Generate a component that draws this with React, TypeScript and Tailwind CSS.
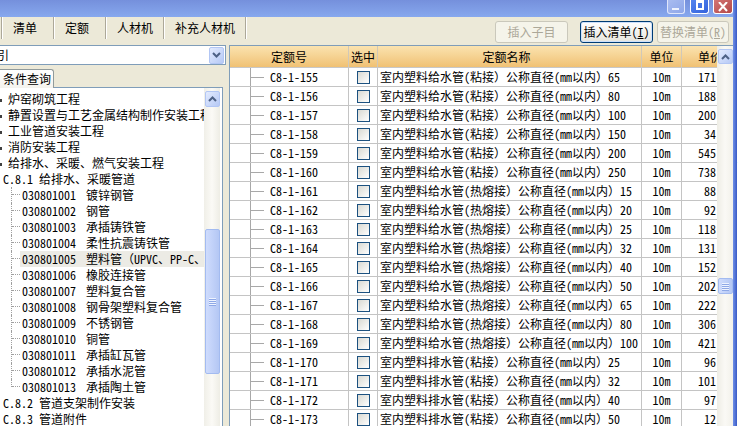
import React from "react";

const F = "font-['Noto_Sans_Mono_CJK_SC','Noto_Sans_CJK_SC',sans-serif]";

function Chevron({ up }: { up: boolean }) {
  return (
    <svg width="9" height="6" viewBox="0 0 9 6">
      <path
        d={up ? "M1 5L4.5 1.5L8 5" : "M1 1L4.5 4.5L8 1"}
        fill="none"
        stroke="#4d6185"
        strokeWidth="2"
      />
    </svg>
  );
}

function XpBtn({ up, className }: { up: boolean; className: string }) {
  return (
    <div
      className={`${className} rounded-[2px] border border-[#b2c6f4] bg-gradient-to-br from-[#e3ebfe] to-[#b6c9f5] flex items-center justify-center shrink-0`}
    >
      <Chevron up={up} />
    </div>
  );
}

function Thumb({ className }: { className: string }) {
  return (
    <div
      className={`${className} rounded-[2px] border border-[#a3bbf0] bg-gradient-to-r from-[#cfdcfd] to-[#b4c7f4] flex flex-col items-center justify-center gap-[1px] shrink-0`}
    >
      <div className="w-[7px] h-[1px] bg-[#eef3ff] shadow-[0_1px_0_#8ea8e6]" />
      <div className="w-[7px] h-[1px] bg-[#eef3ff] shadow-[0_1px_0_#8ea8e6]" />
      <div className="w-[7px] h-[1px] bg-[#eef3ff] shadow-[0_1px_0_#8ea8e6]" />
      <div className="w-[7px] h-[1px] bg-[#eef3ff] shadow-[0_1px_0_#8ea8e6]" />
    </div>
  );
}

const topNodes = [
  "炉窑砌筑工程",
  "静置设置与工艺金属结构制作安装工程",
  "工业管道安装工程",
  "消防安装工程",
  "给排水、采暖、燃气安装工程",
];

const children = [
  ["030801001", "镀锌钢管"],
  ["030801002", "钢管"],
  ["030801003", "承插铸铁管"],
  ["030801004", "柔性抗震铸铁管"],
  ["030801005", "塑料管（UPVC、PP-C、PP-R管）"],
  ["030801006", "橡胶连接管"],
  ["030801007", "塑料复合管"],
  ["030801008", "钢骨架塑料复合管"],
  ["030801009", "不锈钢管"],
  ["030801010", "铜管"],
  ["030801011", "承插缸瓦管"],
  ["030801012", "承插水泥管"],
  ["030801013", "承插陶土管"],
];

const K1 = "给水管(粘接）";
const K2 = "给水管(热熔接）";
const K3 = "排水管(粘接）";
const rows: [number, string, number, number][] = [
  [155, K1, 65, 171],
  [156, K1, 80, 188],
  [157, K1, 100, 200],
  [158, K1, 150, 34],
  [159, K1, 200, 545],
  [160, K1, 250, 738],
  [161, K2, 15, 88],
  [162, K2, 20, 92],
  [163, K2, 25, 118],
  [164, K2, 32, 131],
  [165, K2, 40, 152],
  [166, K2, 50, 202],
  [167, K2, 65, 222],
  [168, K2, 80, 306],
  [169, K2, 100, 421],
  [170, K3, 25, 96],
  [171, K3, 32, 101],
  [172, K3, 40, 97],
  [173, K3, 50, 12],
];

function Tab({ label, w }: { label: string; w: string }) {
  return (
    <div className={`${w} h-full flex items-center pl-[10px] whitespace-nowrap`}>{label}</div>
  );
}

function Sep() {
  return <div className="w-[2px] h-full border-l border-[#aca899] border-r border-r-white" />;
}

export default function App() {
  return (
    <div
      className={`w-[741px] h-[426px] overflow-hidden flex bg-white text-[12px] leading-[16px] text-black ${F}`}
    >
      <div className="w-[733px] h-full flex flex-col bg-[#ece9d8] shrink-0">
        {/* title bar */}
        <div className="h-[17px] shrink-0 bg-gradient-to-b from-[#7590dc] to-[#87a8ee] flex justify-end items-start">
          <div className="w-[18px] h-[14px] rounded-b-[3px] border border-t-0 border-[#dfe6fb] bg-gradient-to-br from-[#a9bcf0] to-[#8ea6e8] relative">
            <div className="absolute left-[4px] top-[8px] w-[7px] h-[2px] bg-[#eef2fd]" />
          </div>
          <div className="ml-[5px] w-[19px] h-[14px] rounded-b-[3px] border border-t-0 border-white bg-gradient-to-br from-[#5585ee] to-[#3462dc] relative">
            <div className="absolute left-[5px] top-0 w-[8px] h-[10px] border-2 border-t-[3px] border-white" />
          </div>
          <div className="ml-[4px] w-[20px] h-[14px] rounded-b-[3px] border border-t-0 border-white bg-gradient-to-br from-[#d27474] to-[#b44848] flex items-center justify-center">
            <svg width="10" height="10" viewBox="0 0 10 10">
              <path d="M1 0L9 9M9 0L1 9" stroke="white" strokeWidth="2" />
            </svg>
          </div>
        </div>

        {/* tabs + buttons */}
        <div className="h-[28px] shrink-0 flex items-start">
          <div className="h-[22px] flex items-center">
            <div className="w-[1px]" />
            <Sep />
            <Tab label="清单" w="w-[50px]" />
            <Sep />
            <Tab label="定额" w="w-[50px]" />
            <Sep />
            <Tab label="人材机" w="w-[56px]" />
            <Sep />
            <Tab label="补充人材机" w="w-[80px]" />
            <Sep />
          </div>
          <div className="ml-auto mr-[4px] mt-[4px] flex">
            <div className="w-[73px] h-[22px] rounded-[3px] border border-[#cac8bb] bg-[#f5f4ea] text-[#aca899] flex items-center justify-center">
              插入子目
            </div>
            <div className="ml-[12px] w-[73px] h-[22px] rounded-[3px] border border-[#003c74] bg-gradient-to-b from-white to-[#e6e5dd] shadow-[inset_0_0_0_1px_#cde0fb] flex items-center justify-center">
              插入清单(<span className="underline">I</span>)
            </div>
            <div className="ml-[4px] w-[72px] h-[22px] rounded-[3px] border border-[#cac8bb] bg-[#f5f4ea] text-[#aca899] flex items-center justify-center">
              替换清单(<span className="underline">R</span>)
            </div>
          </div>
        </div>

        {/* panels */}
        <div className="flex-1 min-h-0 flex">
          {/* left panel */}
          <div className="w-[226px] shrink-0 flex flex-col">
            <div className="h-[20px] shrink-0 border border-l-0 border-[#7f9db9] bg-white flex items-center">
              <span className="-ml-[3px]">引</span>
              <XpBtn up={false} className="ml-auto mr-[1px] w-[15px] h-[17px]" />
            </div>
            <div className="mt-[4px] h-[19px] w-[54px] shrink-0 border border-l-0 border-b-0 border-[#919b9c] rounded-tr-[3px] bg-gradient-to-b from-white to-[#f4f3ee] flex items-center pl-[3px] relative z-10 -mb-[1px]">
              条件查询
            </div>
            <div className="flex-1 min-h-0 w-[223px] border-t border-r border-[#7f9db9] bg-white flex">
              <div className="w-[204px] shrink-0 overflow-hidden pt-[3px] flex flex-col">
                {topNodes.map((t, i) => (
                  <div key={t} className="h-[16px] flex items-center whitespace-nowrap relative">
                    <div className="absolute left-0 top-[8px] w-[2px] h-[3px] bg-[#404040]" />
                    <span className="ml-[8px]">{t}</span>
                  </div>
                ))}
                <div className="h-[16px] flex items-center whitespace-nowrap">
                  <span className="ml-[3px]">C.8.1 给排水、采暖管道</span>
                </div>
                {children.map(([c, n], i) => {
                  const last = i === children.length - 1;
                  const sel = i === 4;
                  return (
                    <div key={c} className="h-[16px] flex whitespace-nowrap">
                      <div className="w-[11px] shrink-0" />
                      <div
                        className={`w-[1px] shrink-0 border-l border-dotted border-[#a0a0a0] ${last ? "h-[8px]" : "h-[16px]"}`}
                      />
                      <div className="w-[8px] shrink-0 h-[8px] border-b border-dotted border-[#a0a0a0]" />
                      <div className={`flex-1 flex items-center ${sel ? "bg-[#ecebe5]" : ""}`}>
                        <span className="w-[66px] shrink-0 pl-[2px]">{c}</span>
                        <span>{n}</span>
                      </div>
                    </div>
                  );
                })}
                <div className="h-[16px] flex items-center whitespace-nowrap">
                  <span className="ml-[3px]">C.8.2 管道支架制作安装</span>
                </div>
                <div className="h-[16px] flex items-center whitespace-nowrap">
                  <span className="ml-[3px]">C.8.3 管道附件</span>
                </div>
              </div>
              <div className="w-[16px] shrink-0 bg-gradient-to-r from-[#f0efe8] via-[#fbfaf6] to-[#eeede5] flex flex-col items-center pt-[3px]">
                <XpBtn up={true} className="w-[15px] h-[16px]" />
                <div className="h-[122px] shrink-0" />
                <Thumb className="w-[15px] h-[145px]" />
              </div>
            </div>
          </div>

          {/* right panel */}
          <div className="ml-[3px] flex-1 min-w-0 border-l border-t border-[#7f9db9] bg-white flex">
            <div className="flex-1 min-w-0 overflow-hidden flex flex-col">
              {/* header */}
              <div className="h-[22px] shrink-0 flex border-b border-[#c8c8c8] bg-gradient-to-b from-[#fbe3af] to-[#f0c173]">
                <div className="w-[119px] shrink-0 border-r border-[#d0c8b8] flex items-center justify-center">定额号</div>
                <div className="w-[29px] shrink-0 border-r border-[#d0c8b8] flex items-center justify-center">选中</div>
                <div className="w-[264px] shrink-0 border-r border-[#d0c8b8] flex items-center justify-center pr-[6px]">定额名称</div>
                <div className="w-[40px] shrink-0 border-r border-[#d0c8b8] flex items-center justify-center">单位</div>
                <div className="w-[56px] shrink-0 flex items-center pl-[16px]">单价</div>
              </div>
              {rows.map(([no, k, d, p]) => (
                <div key={no} className="h-[19px] shrink-0 flex border-b border-[#c4c4c4] whitespace-nowrap">
                  <div className="w-[119px] shrink-0 border-r border-[#c4c4c4] flex items-center">
                    <div className="w-[20px] shrink-0" />
                    <div className="w-[1px] self-stretch bg-[#a8a8a8] shrink-0" />
                    <div className="w-[13px] h-[1px] bg-[#a8a8a8] shrink-0" />
                    <span className="ml-[6px]">C8-1-{no}</span>
                  </div>
                  <div className="w-[29px] shrink-0 border-r border-[#c4c4c4] flex items-center justify-center">
                    <div className="w-[13px] h-[13px] border border-[#1c5180] bg-gradient-to-br from-[#d9d9d2] to-white" />
                  </div>
                  <div className="w-[264px] shrink-0 border-r border-[#c4c4c4] flex items-center pl-[2px] overflow-hidden">
                    室内塑料{k}公称直径(mm以内）{d}
                  </div>
                  <div className="w-[40px] shrink-0 border-r border-[#c4c4c4] flex items-center justify-center">10m</div>
                  <div className="w-[56px] shrink-0 flex items-center">
                    <span className="w-[34px] text-right">{p}</span>
                  </div>
                </div>
              ))}
            </div>
            <div className="w-[16px] shrink-0 bg-gradient-to-r from-[#eeede5] via-[#faf9f5] to-[#f2f1ea] flex flex-col items-center pt-[3px]">
              <XpBtn up={true} className="w-[15px] h-[15px]" />
              <div className="h-[214px] shrink-0" />
              <Thumb className="w-[15px] h-[16px]" />
            </div>
          </div>
        </div>
      </div>
      <div className="w-[4px] h-full shrink-0 bg-gradient-to-r from-[#7090e8] to-[#3a5ac4]" />
      <div className="flex-1 h-full bg-white overflow-hidden relative">
        <div className="absolute -left-[6px] top-[44px] flex flex-col gap-[22px] leading-[16px]">
          <span>6</span>
          <span>6</span>
          <span>9</span>
          <span>T</span>
          <span>r</span>
          <span>r</span>
        </div>
      </div>
    </div>
  );
}
